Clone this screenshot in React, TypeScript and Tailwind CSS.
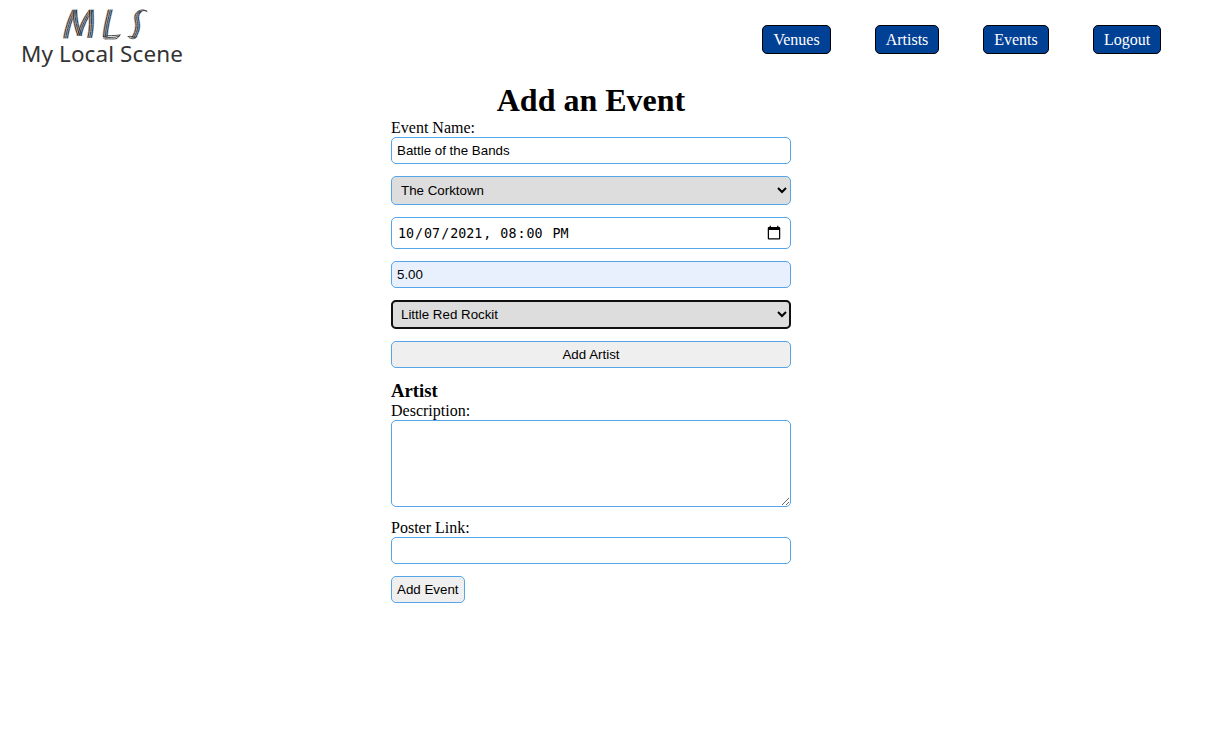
const field =
  'block w-full rounded-[5px] border border-[#55a5e8] p-[5px] font-["Liberation_Sans",Arial,sans-serif] text-[13.333px] leading-[15px] text-black';

const links = [
  { label: 'Venues', width: 'w-[69px]' },
  { label: 'Artists', width: 'w-[64px]' },
  { label: 'Events', width: 'w-[66px]' },
  { label: 'Logout', width: 'w-[68px]' },
];

const ribbons = [
  'M1 29.5C2 22 5 11 10 1.5',
  'M10 2C10 10 12 20 15 27',
  'M14.5 26.5C17 17 21 9 26.5 1.5',
  'M26.5 2C27 11 27 21 25 29',
  'M45.5 1.5C43.5 10 41 19 40.5 28',
  'M75 3C69.5 7 73 12 73 17C73 22 71 26 69 29',
];

const stripes = [
  { x: -0.7, color: '#ee9a50' },
  { x: 0.7, color: '#3f93de' },
  { x: 1.3, color: '#f09a4e' },
  { x: 2.6, color: '#3f93de' },
  { x: 4, color: '#5aa7e4' },
  { x: 0, color: '#201c20' },
  { x: 1.8, color: '#1d2433' },
  { x: 3.4, color: '#1c1c22' },
];

function Logo() {
  return (
    <a href="#" className="flex w-[162px] flex-col items-center text-[#333333]">
      <svg className="ml-[8px] mt-[8px] h-[32px] w-[86px]" viewBox="0 0 86 32" fill="none" strokeLinecap="round">
        <g transform="translate(0 0.5)">
          {ribbons.map((d) => (
            <g key={d} strokeWidth="0.8">
              {stripes.map((s) => (
                <path key={s.x} d={d} stroke={s.color} transform={`translate(${s.x} 0)`} />
              ))}
            </g>
          ))}
          <g stroke="#2d2d2d" strokeWidth="0.85">
            <path d="M40.5 28C46 26.5 51 27.5 57 26.5M40.5 29.5C46 28.5 50 29.5 56 28M42 30.5C47 30 51 31 54 30L57 26.5" />
            <path d="M75 3C78 0.8 81 0.8 84 3M76 4C79 1.7 81 1.7 83.5 2.5M65 28C68 27.2 70 28.5 72 29M66 29C69 30.8 72 31 74 28" />
          </g>
        </g>
      </svg>
      <span className='whitespace-nowrap font-["Noto_Sans",sans-serif] text-[22.49px] leading-[28px] tracking-[0.1px]'>My Local Scene</span>
    </a>
  );
}

export default function App() {
  return (
    <div className='min-h-[740px] bg-white font-["Liberation_Serif",serif] text-base leading-[18px] text-black'>
      <header className="flex h-[80px] items-start justify-between pl-[21px] pr-[62px]">
        <Logo />
        <nav className="mt-[25px] flex gap-[44px]">
          {links.map((l) => (
            <a key={l.label} href="#" className={`${l.width} flex h-[29px] items-center justify-center rounded-[5px] border border-black bg-[#004095] text-white`}>
              {l.label}
            </a>
          ))}
        </nav>
      </header>
      <form className="ml-[391px] w-[400px]" onSubmit={(e) => e.preventDefault()}>
        <h1 className="pt-[2px] text-center text-[32px] font-bold leading-[37px]">Add an Event</h1>
        <label className="block" htmlFor="name">Event Name:</label>
        <input id="name" className={`${field} mb-3 h-[27px] bg-white`} defaultValue="Battle of the Bands" />
        <select className={`${field} mb-3 h-[29px] bg-[#dddddd]`}>
          <option>The Corktown</option>
        </select>
        <input
          type="datetime-local"
          className='mb-3 block h-[32px] w-full rounded-[5px] border border-[#55a5e8] bg-white px-[5px] pb-[4px] pt-[6px] font-[monospace] text-[13.333px] text-black [&::-webkit-calendar-picker-indicator]:mb-[2px] [&::-webkit-calendar-picker-indicator]:mr-px [&::-webkit-calendar-picker-indicator]:h-[16px] [&::-webkit-calendar-picker-indicator]:w-[16px]'
          defaultValue="2021-10-07T20:00"
        />
        <input className={`${field} mb-3 h-[27px] bg-[#e8f0fe]`} defaultValue="5.00" />
        <select className={`${field} mb-3 h-[29px] bg-[#dddddd] outline-2 -outline-offset-2 outline-[#101010]`}>
          <option>Little Red Rockit</option>
        </select>
        <button type="button" className={`${field} mb-3 h-[27px] bg-[#efefef]`}>Add Artist</button>
        <h3 className="text-[18.72px] font-bold leading-[22px]">Artist</h3>
        <label className="block" htmlFor="description">Description:</label>
        <textarea id="description" className={`${field} mb-3 h-[87px] resize bg-white`} />
        <label className="block" htmlFor="poster">Poster Link:</label>
        <input id="poster" className={`${field} mb-3 h-[27px] bg-white`} />
        <button className='block h-[27px] w-fit rounded-[5px] border border-[#55a5e8] bg-[#efefef] px-[5px] font-["Liberation_Sans",Arial,sans-serif] text-[13.333px] leading-[15px]'>
          Add Event
        </button>
      </form>
    </div>
  );
}
